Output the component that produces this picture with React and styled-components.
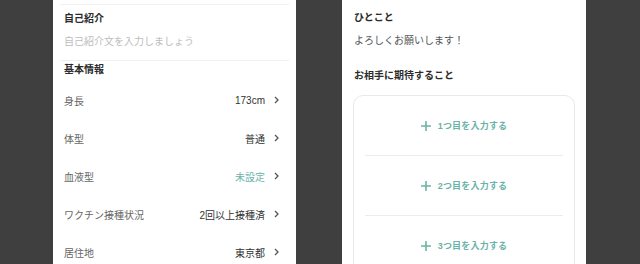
import React from 'react';
import styled, { createGlobalStyle } from 'styled-components';

const GlobalStyle = createGlobalStyle`
  html, body {
    margin: 0;
    padding: 0;
    background: #3f3f3f;
    font-family: 'Liberation Sans', 'Noto Sans CJK JP', sans-serif;
  }
`;

const teal = '#6bb3a8';

const Stage = styled.div`
  width: 640px;
  height: 264px;
  overflow: hidden;
  display: flex;
  align-items: flex-start;
  padding-left: 53px;
  gap: 46px;
  box-sizing: border-box;
`;

const Panel = styled.div`
  width: ${({ w }) => w}px;
  height: 264px;
  background: #fff;
  box-sizing: border-box;
  padding: ${({ pad }) => pad};
  display: flex;
  flex-direction: column;
`;

const Rule = styled.div`
  height: 1px;
  background: #f0f0f0;
  flex-shrink: 0;
`;

const Section = styled.div`
  padding: ${({ pad }) => pad || '0 4px'};
  display: flex;
  flex-direction: column;
`;

const Title = styled.div`
  font-size: 10px;
  font-weight: 700;
  color: #2b2b2b;
  line-height: 14px;
  margin-top: ${({ gapTop }) => gapTop || 0}px;
`;

const Placeholder = styled.div`
  font-size: 10px;
  color: #bdbdbd;
  line-height: 14px;
  margin-top: 9px;
`;

const Row = styled.div`
  height: 38px;
  display: flex;
  align-items: center;
  justify-content: space-between;
  padding-right: 6px;
`;

const Label = styled.span`
  font-size: 10px;
  color: #666;
`;

const Value = styled.span`
  display: flex;
  align-items: center;
  gap: 9px;
  font-size: 10px;
  color: ${({ accent }) => (accent ? teal : '#333')};
`;

const Body = styled.div`
  font-size: 10px;
  color: #555;
  line-height: 14px;
  margin-top: 9px;
`;

const Card = styled.div`
  margin-top: 12px;
  margin-left: -1px;
  border: 1px solid #e8e8e8;
  border-radius: 10px;
  display: flex;
  flex-direction: column;
  padding: 0 11px;
`;

const Slot = styled.div`
  height: 59px;
  display: flex;
  align-items: center;
  justify-content: center;
  gap: 7px;
  border-top: ${({ first }) => (first ? 'none' : '1px solid #ececec')};
  color: ${teal};
  font-size: 9px;
  font-weight: 700;
  letter-spacing: 0.2px;
`;

const Chevron = () => (
  <svg width="5" height="8" viewBox="0 0 5 8">
    <path d="M1 1l3 3-3 3" fill="none" stroke="#555" strokeWidth="1.3" />
  </svg>
);

const Plus = () => (
  <svg width="10" height="10" viewBox="0 0 10 10">
    <path d="M5 0v10M0 5h10" stroke={teal} strokeWidth="1.6" />
  </svg>
);

const basics = [
  { label: '身長', value: '173cm' },
  { label: '体型', value: '普通' },
  { label: '血液型', value: '未設定', accent: true },
  { label: 'ワクチン接種状況', value: '2回以上接種済' },
  { label: '居住地', value: '東京都' },
];

const App = () => (
  <>
    <GlobalStyle />
    <Stage>
      <Panel w={243} pad="4px 7px 0">
        <Rule />
        <Section pad="7px 4px 11px">
          <Title>自己紹介</Title>
          <Placeholder>自己紹介文を入力しましょう</Placeholder>
        </Section>
        <Rule />
        <Section pad="2px 4px 0">
          <Title>基本情報</Title>
        </Section>
        <Section pad="4px 4px 0">
          {basics.map(b => (
            <Row key={b.label}>
              <Label>{b.label}</Label>
              <Value accent={b.accent}>
                {b.value}
                <Chevron />
              </Value>
            </Row>
          ))}
        </Section>
      </Panel>
      <Panel w={244} pad="11px 11px 0 12px">
        <Title>ひとこと</Title>
        <Body>よろしくお願いします！</Body>
        <Title gapTop={21}>お相手に期待すること</Title>
        <Card>
          {['1', '2', '3'].map((n, i) => (
            <Slot key={n} first={i === 0}>
              <Plus />
              {n}つ目を入力する
            </Slot>
          ))}
        </Card>
      </Panel>
    </Stage>
  </>
);

export default App;
